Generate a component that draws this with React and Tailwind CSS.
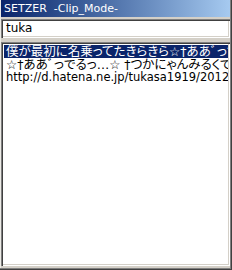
import React from "react";

const rows = [
  { text: "僕が最初に名乗ってたきらきら☆†ああﾞっでるっ†☆", size: "text-[12.5px]" },
  { text: "☆†ああﾞっでるっ…☆ †つかにゃんみるくでるっ†☆", size: "text-[12.5px]" },
  { text: "http://d.hatena.ne.jp/tukasa1919/20120101", size: "text-[11.5px]" },
];

const App = () => {
  return (
    <div
      className="w-[232px] h-[270px] bg-[#d4d0c8] flex flex-col pl-[1px] pr-[2px] pb-[2px] shadow-[inset_-1px_-1px_#404040,inset_-2px_-2px_#808080,inset_1px_0_#ecebe6] font-['DejaVu_Sans','Noto_Sans_CJK_JP',sans-serif] [font-feature-settings:'palt']"
    >
      {/* Title */}
      <div className="h-[17px] shrink-0 bg-gradient-to-r from-[#0a246a] to-[#a6caf0] text-white text-[11px] leading-[17px] pl-[3px] whitespace-pre">
        {"SETZER  -Clip_Mode-"}
      </div>

      {/* Search box */}
      <div className="mt-[2px] h-[19px] shrink-0 bg-white shadow-[inset_1px_1px_#808080,inset_2px_2px_#404040,inset_-1px_-1px_#ffffff,inset_-2px_-2px_#d4d0c8] pl-[5px] text-[12px] leading-[19px] text-black">
        tuka
      </div>

      {/* List */}
      <div className="mt-[4px] mb-[2px] flex-1 bg-white shadow-[inset_1px_1px_#808080,inset_2px_2px_#404040,inset_-1px_-1px_#ffffff,inset_-2px_-2px_#d4d0c8] pt-[3px] pl-[3px] pr-[2px] overflow-hidden">
        {rows.map((row, i) => (
          <div
            key={i}
            className={`h-[13px] leading-[13px] ${row.size} pl-[2px] whitespace-nowrap overflow-hidden ${
              i === 0 ? "bg-[#0a246a] text-white" : "text-black"
            }`}
          >
            {row.text}
          </div>
        ))}
      </div>
    </div>
  );
};

export default App;
